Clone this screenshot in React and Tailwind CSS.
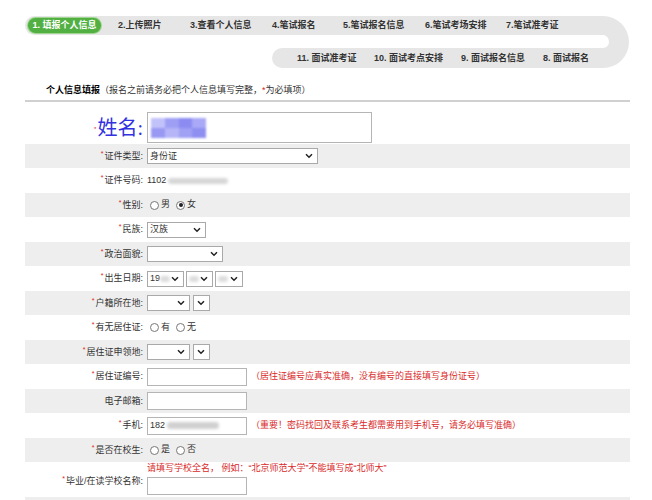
import React from "react";

// ── Helpers ───────────────────────────────────────────────────────────────
const Chevron = () => (
  <svg width="8" height="6" viewBox="0 0 8 6" className="shrink-0">
    <path d="M1 1.2l3 3 3-3" fill="none" stroke="#222" strokeWidth="1.5" />
  </svg>
);

const Star = () => (
  <span className="text-[#e02020] text-[7px] relative -top-[3px] mr-[1px]">*</span>
);

const Label = ({ children, className = "" }) => (
  <div className={`w-[118px] shrink-0 flex justify-end items-center text-[9px] text-[#333] leading-none ${className}`}>
    <Star />
    {children}:
  </div>
);

const Select = ({ w, children }) => (
  <div className={`${w} h-[16px] border border-[#a9a9a9] bg-white flex items-center justify-between pl-[2px] pr-[4px] text-[9px] text-[#333] leading-none`}>
    <span className="flex items-center">{children}</span>
    <Chevron />
  </div>
);

const Input = ({ children, className = "h-[18px]" }) => (
  <div className={`w-[100px] ${className} border border-[#b5b5b5] bg-white flex items-center pl-[2px] text-[9px] text-[#333]`}>
    {children}
  </div>
);

const Radio = ({ label, checked }) => (
  <div className="flex items-center mr-[6px]">
    <span className="w-[9px] h-[9px] rounded-full border border-[#777] bg-white flex items-center justify-center">
      {checked && <span className="w-[4px] h-[4px] rounded-full bg-[#222]" />}
    </span>
    <span className="ml-[2px] text-[9px] text-[#333]">{label}</span>
  </div>
);

const Blur = ({ className }) => <span className={`inline-block blur-[1.5px] rounded-sm ${className}`} />;

const Row = ({ gray, h = "h-[24px]", children, className = "items-center" }) => (
  <div className={`flex ${className} ${h} ${gray ? "bg-[#eeeeee]" : "bg-white"}`}>{children}</div>
);

const Hint = ({ children, className = "" }) => (
  <span className={`text-[9px] text-[#d92b2b] leading-none ${className}`}>{children}</span>
);

// ── Page ──────────────────────────────────────────────────────────────────
export default function App() {
  return (
    <div className="w-[652px] min-h-[500px] bg-white font-['Liberation_Sans','Noto_Sans_CJK_SC',sans-serif] overflow-hidden">
      <div className="ml-[25px] w-[605px]">
        {/* progress steps */}
        <div className="flex mt-[16px] text-[9px] font-bold text-[#333] leading-none">
          <div className="flex flex-col w-[578px]">
            <div className="h-[19px] bg-[#e6e6e6] rounded-l-full flex items-center">
              <div className="ml-[3px] w-[73px] h-[15px] rounded-full bg-[#52b043] ring-1 ring-[#9fd68f] text-white flex items-center justify-center">
                1. 填报个人信息
              </div>
              <span className="ml-[17px] w-[72px]">2.上传照片</span>
              <span className="w-[82px]">3.查看个人信息</span>
              <span className="w-[71px]">4.笔试报名</span>
              <span className="w-[82px]">5.笔试报名信息</span>
              <span className="w-[81px]">6.笔试考场安排</span>
              <span>7.笔试准考证</span>
            </div>
            <div className="h-[13px]" />
            <div className="h-[20px] ml-[247px] bg-[#e6e6e6] rounded-l-full flex items-center">
              <span className="ml-[25px] w-[77px]">11. 面试准考证</span>
              <span className="w-[87px]">10. 面试考点安排</span>
              <span className="w-[82px]">9. 面试报名信息</span>
              <span>8. 面试报名</span>
            </div>
          </div>
          <div className="w-[26px] h-[52px] border-t-[19px] border-b-[20px] border-r-[20px] border-l-0 border-[#e6e6e6] rounded-r-[26px]" />
        </div>

        {/* section title */}
        <div className="mt-[16px] ml-[21px] h-[12px] flex items-center text-[9px] leading-none text-[#333]">
          <span className="font-bold text-black">个人信息填报</span>
          <span>（报名之前请务必把个人信息填写完整，</span>
          <span className="text-[#e02020]">*</span>
          <span>为必填项）</span>
        </div>
        <div className="mt-[4px] h-[2px] bg-[#d0d0d0]" />

        {/* name */}
        <div className="flex items-center h-[42px] pt-[9px]">
          <div className="w-[118px] flex justify-end items-center">
            <span className="text-[#e02020] text-[6px] mr-[1px] mt-[3px]">*</span>
            <span className="text-[20px] leading-none text-[#3232e0] font-['Liberation_Serif','Noto_Sans_CJK_SC',serif]">姓名:</span>
          </div>
          <div className="ml-[4px] w-[225px] h-[31px] border border-[#b5b5b5] bg-white flex items-center pl-[3px]">
            <div className="grid grid-cols-4 w-[55px] h-[20px] blur-[1px]">
              <span className="bg-[#c2c2fa]" />
              <span className="bg-[#9e9ef5]" />
              <span className="bg-[#8b8bf2]" />
              <span className="bg-[#a9a9f7]" />
              <span className="bg-[#9999f4]" />
              <span className="bg-[#b5b5f8]" />
              <span className="bg-[#a0a0f5]" />
              <span className="bg-[#8f8ff2]" />
            </div>
          </div>
        </div>

        <Row gray>
          <Label>证件类型</Label>
          <div className="ml-[4px]"><Select w="w-[171px]">身份证</Select></div>
        </Row>
        <Row h="h-[25px]">
          <Label>证件号码</Label>
          <div className="ml-[4px] flex items-center text-[9px] text-[#333]">
            1102
            <Blur className="ml-[2px] w-[60px] h-[6px] bg-[#d6d6d6]" />
          </div>
        </Row>
        <Row gray>
          <Label>性别</Label>
          <div className="ml-[4px] flex items-center pl-[3px]">
            <Radio label="男" />
            <Radio label="女" checked />
          </div>
        </Row>
        <Row h="h-[25px]">
          <Label>民族</Label>
          <div className="ml-[4px]"><Select w="w-[59px]">汉族</Select></div>
        </Row>
        <Row gray>
          <Label>政治面貌</Label>
          <div className="ml-[4px]"><Select w="w-[76px]" /></div>
        </Row>
        <Row h="h-[25px]">
          <Label>出生日期</Label>
          <div className="ml-[4px] flex gap-[2px]">
            <Select w="w-[37px]">
              19<Blur className="w-[10px] h-[6px] bg-[#dcdcdc]" />
            </Select>
            <Select w="w-[27px]"><Blur className="w-[10px] h-[6px] bg-[#dcdcdc]" /></Select>
            <Select w="w-[28px]"><Blur className="w-[10px] h-[6px] bg-[#dcdcdc]" /></Select>
          </div>
        </Row>
        <Row gray>
          <Label>户籍所在地</Label>
          <div className="ml-[4px] flex gap-[3px]">
            <Select w="w-[43px]" />
            <Select w="w-[17px]" />
          </div>
        </Row>
        <Row h="h-[25px]">
          <Label>有无居住证</Label>
          <div className="ml-[4px] flex items-center pl-[3px]">
            <Radio label="有" />
            <Radio label="无" />
          </div>
        </Row>
        <Row gray>
          <Label>居住证申领地</Label>
          <div className="ml-[4px] flex gap-[3px]">
            <Select w="w-[43px]" />
            <Select w="w-[17px]" />
          </div>
        </Row>
        <Row h="h-[25px]">
          <Label>居住证编号</Label>
          <div className="ml-[4px] flex items-center">
            <Input />
            <Hint className="ml-[4px]">（居住证编号应真实准确，没有编号的直接填写身份证号）</Hint>
          </div>
        </Row>
        <Row gray>
          <div className="w-[118px] shrink-0 flex justify-end text-[9px] text-[#333] leading-none">电子邮箱:</div>
          <div className="ml-[4px]"><Input /></div>
        </Row>
        <Row h="h-[25px]">
          <Label>手机</Label>
          <div className="ml-[4px] flex items-center">
            <Input>
              182<Blur className="ml-[2px] w-[52px] h-[7px] bg-[#d0d0d0]" />
            </Input>
            <Hint className="ml-[4px]">（重要！密码找回及联系考生都需要用到手机号，请务必填写准确）</Hint>
          </div>
        </Row>
        <Row gray>
          <Label>是否在校生</Label>
          <div className="ml-[4px] flex items-center pl-[3px]">
            <Radio label="是" />
            <Radio label="否" />
          </div>
        </Row>
        <Row h="h-[35px]">
          <Label className="pt-[3px]">毕业/在读学校名称</Label>
          <div className="ml-[4px] flex flex-col">
            <Hint>请填写学校全名， 例如：“北京师范大学”不能填写成“北师大”</Hint>
            <div className="mt-[4px]"><Input className="h-[18px]" /></div>
          </div>
        </Row>
        <Row gray h="h-[24px]" className="items-start">
          <div className="w-[118px] shrink-0" />
          <div className="ml-[4px] pt-[3px]">
            <Hint>请如实填写毕业时间，在校生请填写预计毕业时间</Hint>
          </div>
        </Row>
      </div>
    </div>
  );
}
